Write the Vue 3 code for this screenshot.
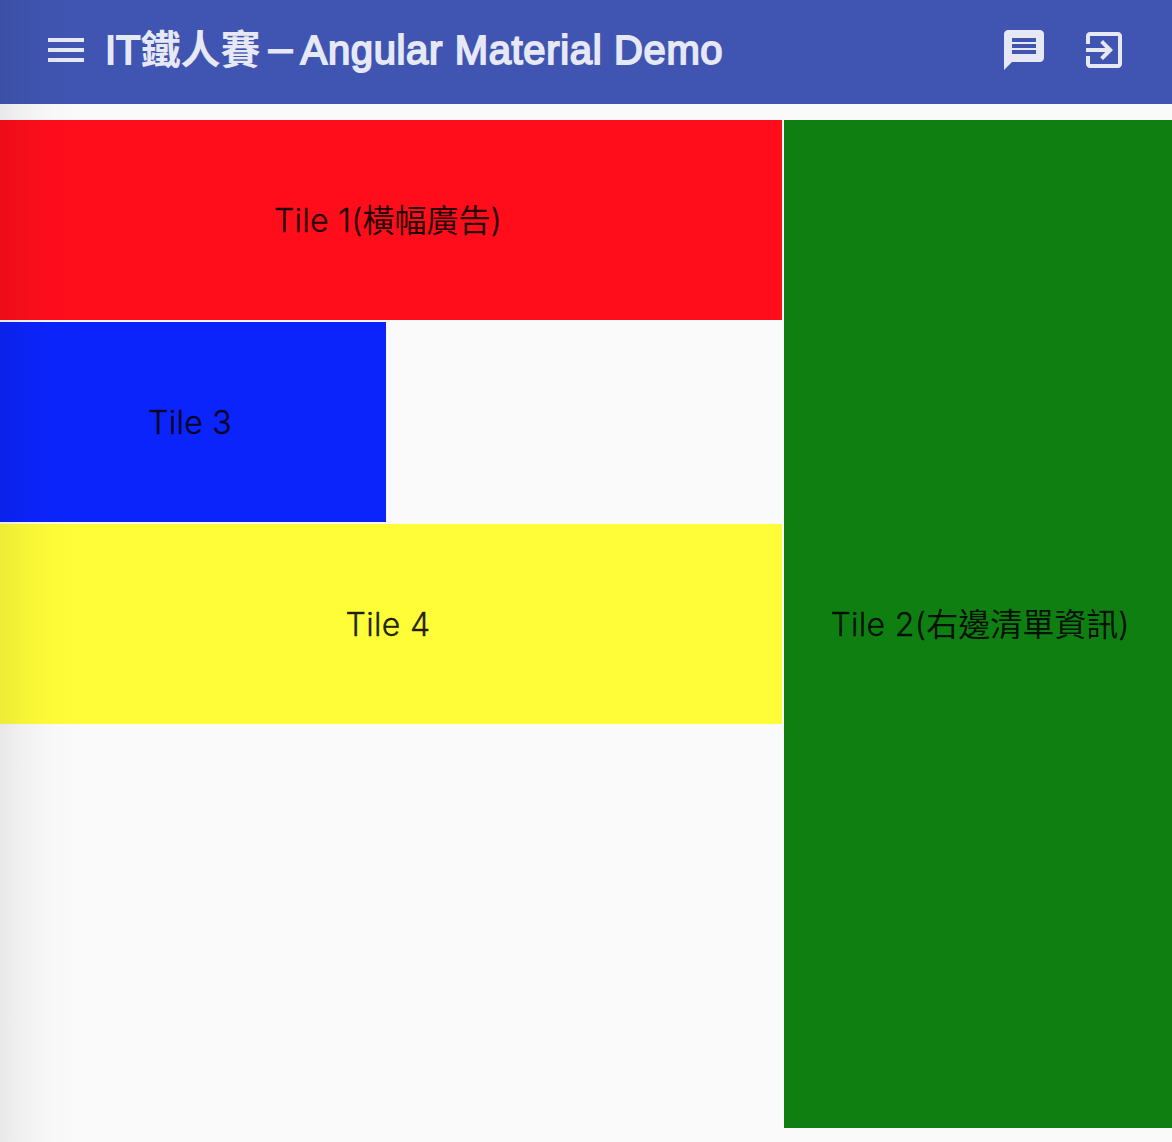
<script setup>
const tiles = [
  { id: 1, latin: 'Tile 1(', han: '橫幅廣告', end: ')' },
  { id: 2, latin: 'Tile 2(', han: '右邊清單資訊', end: ')' },
  { id: 3, latin: 'Tile 3', han: '', end: '' },
  { id: 4, latin: 'Tile 4', han: '', end: '' },
]
</script>

<template>
  <div class="page">
    <header class="toolbar">
      <svg class="icon" viewBox="0 0 24 24"><path d="M3 18h18v-2H3v2zm0-5h18v-2H3v2zm0-7v2h18V6H3z" /></svg>
      <h1 class="title"><span class="it">IT</span><span class="han">鐵人賽</span><span class="dash">－</span><span class="name">Angular Material Demo</span></h1>
      <svg class="icon" viewBox="0 0 24 24"><path d="M20 2H4c-1.1 0-1.99.9-1.99 2L2 22l4-4h14c1.1 0 2-.9 2-2V4c0-1.1-.9-2-2-2zM6 9h12v2H6V9zm12 5H6v-2h12v2zm0-6H6V6h12v2z" /></svg>
      <svg class="icon exit" viewBox="0 0 24 24"><path d="M10.09 15.59L11.5 17l5-5-5-5-1.41 1.41L12.67 11H3v2h9.67l-2.58 2.59zM19 3H5c-1.11 0-2 .9-2 2v4h2V5h14v14H5v-4H3v4c0 1.1.89 2 2 2h14c1.1 0 2-.9 2-2V5c0-1.1-.9-2-2-2z" /></svg>
    </header>
    <main class="grid">
      <section v-for="t in tiles" :key="t.id" class="tile" :class="'tile-' + t.id">
        <span class="label">{{ t.latin }}<span v-if="t.han" class="label-han">{{ t.han }}</span>{{ t.end }}</span>
      </section>
    </main>
    <div class="edge-shadow"></div>
  </div>
</template>

<style>
body { background: #fafafa; }
</style>

<style scoped>
.page {
  position: relative;
  height: 1142px;
  overflow: hidden;
  background: #fafafa;
}
.toolbar {
  display: flex;
  align-items: center;
  box-sizing: border-box;
  height: 104px;
  padding: 0 44px 4px 42px;
  background: #3f55b1;
  color: #e6e8f5;
}
.icon {
  flex: none;
  width: 48px;
  height: 48px;
  fill: currentColor;
}
.exit { margin-left: 32px; }
.title {
  flex: 1;
  margin: 0 0 0 15px;
  font: 400 40px/48px "Liberation Sans", "Noto Sans CJK TC", sans-serif;
  white-space: nowrap;
}
.it, .name { -webkit-text-stroke: 1.8px currentColor; }
.name { letter-spacing: 0.65px; }
.han { font-weight: 700; }
.dash {
  display: inline-block;
  width: 40px;
  font-size: 34px;
  font-weight: 700;
  line-height: 40px;
  text-align: center;
  -webkit-text-stroke: 1px currentColor;
}
.grid {
  display: grid;
  grid-template-columns: repeat(3, 394px);
  grid-template-rows: repeat(5, 200px);
  gap: 2px;
  margin: 16px 0 0 -8px;
}
.tile {
  display: flex;
  align-items: center;
  justify-content: center;
  box-sizing: border-box;
  padding: 2px 0 0 2px;
  color: rgba(0, 0, 0, 0.87);
  font: 300 32px/48px Inter, "Noto Sans CJK TC", sans-serif;
  letter-spacing: 0.3px;
  -webkit-text-stroke: 0.4px currentColor;
}
.label-han {
  font-weight: 400;
  letter-spacing: 0;
  -webkit-text-stroke: 0;
}
.tile-1 { grid-area: 1 / 1 / 2 / 3; background: #ff0d1b; }
.tile-2 { grid-area: 1 / 3 / 6 / 4; padding: 2px 2px 0 0; background: #0f7f12; }
.tile-3 { grid-area: 2 / 1 / 3 / 2; background: #0b24fb; }
.tile-4 { grid-area: 3 / 1 / 4 / 3; background: #fffd38; }
.label { white-space: nowrap; }
.edge-shadow {
  position: absolute;
  inset: 0 auto 0 0;
  width: 80px;
  background: linear-gradient(to right, rgba(0, 0, 0, 0.07), rgba(0, 0, 0, 0.035) 30%, rgba(0, 0, 0, 0.01) 60%, transparent);
}
</style>
